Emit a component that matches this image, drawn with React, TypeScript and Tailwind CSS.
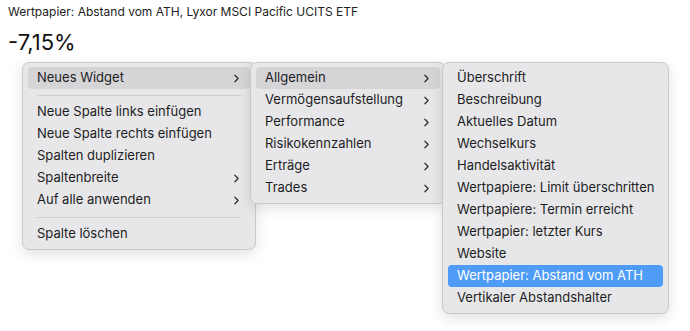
import { ChevronRight } from "lucide-react"

type Item = { label: string; sub?: boolean; active?: "gray" | "blue" } | "sep"

const menuOne: Item[] = [
  { label: "Neues Widget", sub: true, active: "gray" },
  "sep",
  { label: "Neue Spalte links einfügen" },
  { label: "Neue Spalte rechts einfügen" },
  { label: "Spalten duplizieren" },
  { label: "Spaltenbreite", sub: true },
  { label: "Auf alle anwenden", sub: true },
  "sep",
  { label: "Spalte löschen" },
]

const menuTwo: Item[] = [
  { label: "Allgemein", sub: true, active: "gray" },
  { label: "Vermögensaufstellung", sub: true },
  { label: "Performance", sub: true },
  { label: "Risikokennzahlen", sub: true },
  { label: "Erträge", sub: true },
  { label: "Trades", sub: true },
]

const menuThree: Item[] = [
  { label: "Überschrift" },
  { label: "Beschreibung" },
  { label: "Aktuelles Datum" },
  { label: "Wechselkurs" },
  { label: "Handelsaktivität" },
  { label: "Wertpapiere: Limit überschritten" },
  { label: "Wertpapiere: Termin erreicht" },
  { label: "Wertpapier: letzter Kurs" },
  { label: "Website" },
  { label: "Wertpapier: Abstand vom ATH", active: "blue" },
  { label: "Vertikaler Abstandshalter" },
]

function Menu({ items, className }: { items: Item[]; className: string }) {
  return (
    <div
      className={`absolute rounded-[7px] border border-[#c9c9cc] bg-[#e7e7e9] px-[5px] py-[4px] shadow-[0_4px_14px_rgba(0,0,0,0.12)] ${className}`}
    >
      {items.map((it, i) =>
        it === "sep" ? (
          <div key={i} className="flex h-[12px] items-center px-[9px]">
            <div className="h-px w-full bg-[#cdcdd0]" />
          </div>
        ) : (
          <div
            key={i}
            className={`flex h-[22px] items-center justify-between rounded-[4px] pl-[9px] pr-[7px] ${
              it.active === "gray" ? "bg-[#d5d5d8]" : it.active === "blue" ? "bg-[#4f9cf8] text-white" : "text-[#1d1d1f]"
            }`}
          >
            <span>{it.label}</span>
            {it.sub && <ChevronRight size={13} strokeWidth={2.2} className="text-[#2a2a2c]" />}
          </div>
        )
      )}
    </div>
  )
}

export default function App() {
  return (
    <div className="relative h-[331px] w-[690px] overflow-hidden bg-white font-['Inter','Liberation_Sans',sans-serif] text-[13px] text-[#1d1d1f]">
      <div className="px-[8px] pt-[3px]">
        <div className="text-[12px] leading-[18px] text-[#222]">Wertpapier: Abstand vom ATH, Lyxor MSCI Pacific UCITS ETF</div>
        <div className="mt-[8px] text-[22px] leading-[26px] text-[#111]">-7,15%</div>
      </div>

      <Menu items={menuOne} className="left-[22px] top-[62px] w-[234px]" />
      <Menu items={menuTwo} className="left-[250px] top-[62px] w-[196px]" />
      <Menu items={menuThree} className="left-[442px] top-[62px] w-[227px]" />
    </div>
  )
}
